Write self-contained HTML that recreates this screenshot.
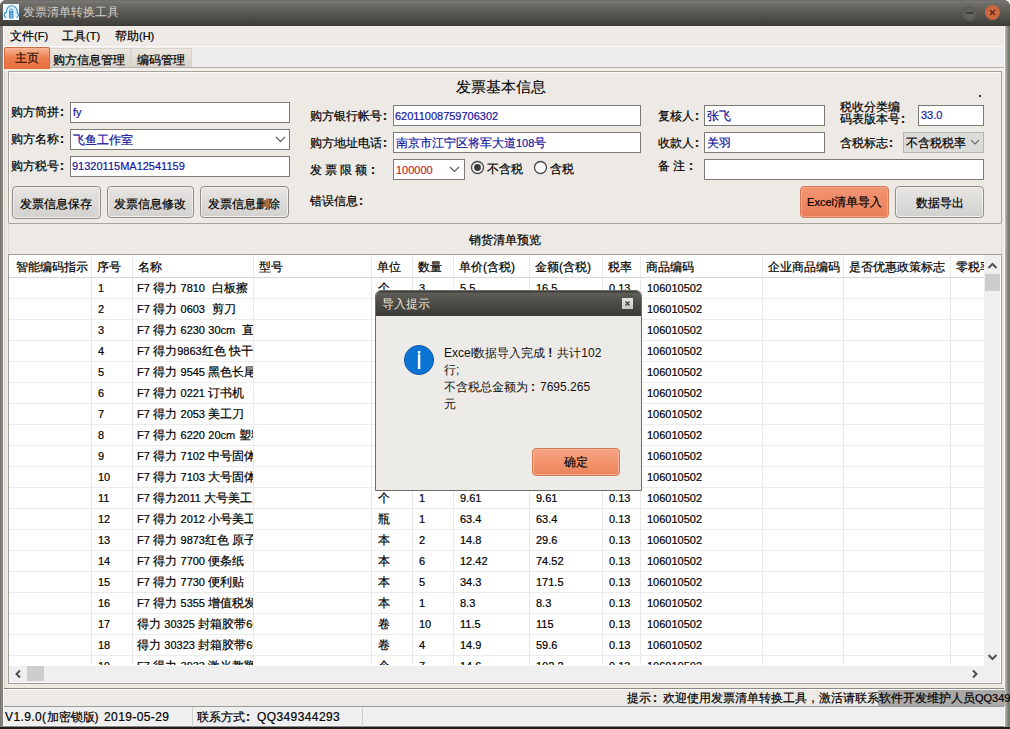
<!DOCTYPE html><html><head><meta charset="utf-8"><style>
*{box-sizing:border-box;margin:0;padding:0}
html,body{width:1010px;height:729px;overflow:hidden;background:#fff}
body{font-family:"Liberation Sans",sans-serif;font-size:12px;color:#000;position:relative}
.a{position:absolute;white-space:nowrap}
.t{position:absolute;white-space:nowrap;font-size:12px;line-height:14px;-webkit-text-stroke:0.2px}
.n{font-size:11px}
.n2{font-size:12px;letter-spacing:0.4px}
.c{font-weight:bold;margin-left:1px;letter-spacing:0}
.fc{display:inline-block;width:12px;padding-left:2px;font-weight:bold;text-align:left}
.dlg .fc{padding-left:3px}
.box{position:absolute;background:#fff;border:1px solid #7c7a76}
.btn{position:absolute;border:1px solid #8f8d89;border-radius:4px;background:linear-gradient(#e6e5e3,#d2d1ce);box-shadow:inset 0 0 0 1px #f0efed}
.blue{color:#15159c}
.cell{position:absolute;overflow:hidden;white-space:pre;font-size:12px;line-height:14px;-webkit-text-stroke:0.2px}
</style></head><body>
<div class="a" style="left:0;top:0;width:1010px;height:729px;background:#7d7a76;border-radius:6px 6px 0 0"></div>
<div class="a" style="left:1005px;top:20px;width:5px;height:709px;background:linear-gradient(90deg,#bfbcb5,#8c8a85 50%,#6e6e6a)"></div>
<div class="a" style="left:0;top:726px;width:1010px;height:1px;background:#8a8a88"></div>
<div class="a" style="left:0;top:727px;width:1010px;height:2px;background:#1e1e1e"></div>
<div class="a" style="left:0;top:0;width:1010px;height:26px;background:linear-gradient(#6c6b67 0%,#777672 6%,#6b6a65 18%,#5a5954 50%,#4a4944 75%,#3c3b37 100%);border-radius:6px 6px 0 0"></div>
<div class="a" style="left:3px;top:4px;width:16px;height:16px;background:#f2fbff"></div>
<svg class="a" style="left:3px;top:4px" width="16" height="16" viewBox="0 0 16 16"><path d="M3.2 13.5 C0.6 13.3 0.6 8.6 3.3 8.4 C3.4 4.2 6 1.6 9 1.8 C12.4 2 14.6 5 14.2 8.6 C16 9.6 15.6 13.3 13.4 13.5" fill="#def2fb" stroke="#3b8dc9" stroke-width="1.1"/><rect x="6" y="7" width="4.4" height="7.5" fill="#3b8dc9"/><path d="M6.8 9.2 H9.6 M6.8 11.2 H9.6 M6.8 13 H9.6" stroke="#bfe3f5" stroke-width="0.8"/><circle cx="8.2" cy="6.6" r="1.6" fill="none" stroke="#3b8dc9" stroke-width="1"/></svg>
<div class="t" style="left:23px;top:5px;color:#d3cfc7;-webkit-text-stroke:0">发票清单转换工具</div>
<div class="a" style="left:962px;top:6px;width:15px;height:15px;border-radius:50%;background:radial-gradient(#6a6964,#55544f);"></div>
<div class="a" style="left:966px;top:12px;width:7px;height:2px;background:#3e3d39"></div>
<div class="a" style="left:985px;top:5px;width:15px;height:15px;border-radius:50%;background:radial-gradient(#d97248,#c05d33)"></div>
<svg class="a" style="left:985px;top:5px" width="15" height="15"><path d="M5 5 L10 10 M10 5 L5 10" stroke="#5a2a14" stroke-width="1.5"/></svg>
<div class="a" style="left:3px;top:26px;width:1002px;height:700px;background:#edeae6"></div>
<div class="a" style="left:0;top:26px;width:3px;height:700px;background:linear-gradient(90deg,#6f6d69,#8b8985 50%,#7f7c78)"></div>
<div class="a" style="left:3px;top:26px;width:1px;height:700px;background:#faf8ef"></div>
<div class="a" style="left:4px;top:69px;width:1px;height:619px;background:#d3d0c7"></div>
<div class="a" style="left:1004px;top:26px;width:1px;height:701px;background:#f7f6f3"></div>
<div class="a" style="left:4px;top:26px;width:1000px;height:20px;background:#eeebe7"></div>
<div class="t" style="left:10px;top:29px">文件<span class="n">(F)</span></div>
<div class="t" style="left:62px;top:29px">工具<span class="n">(T)</span></div>
<div class="t" style="left:115px;top:29px">帮助<span class="n">(H)</span></div>
<div class="a" style="left:4px;top:46px;width:1000px;height:1px;background:#fbfaf8"></div>
<div class="a" style="left:4px;top:47px;width:1000px;height:20px;background:#eeeeee"></div>
<div class="a" style="left:4px;top:67px;width:1000px;height:1px;background:#b4b2ae"></div>
<div class="a" style="left:4px;top:68px;width:1000px;height:3px;background:#f3f0eb"></div>
<div class="a" style="left:50px;top:48px;width:81px;height:19px;background:linear-gradient(#ebe8e1,#d9d4ca);border:1px solid #d8d4cc;border-bottom:none"></div>
<div class="a" style="left:131px;top:48px;width:61px;height:19px;background:linear-gradient(#ebe8e1,#d9d4ca);border:1px solid #d8d4cc;border-bottom:none"></div>
<div class="a" style="left:4px;top:47px;width:46px;height:22px;background:linear-gradient(#f7b697,#ef7f4e 45%,#e8703e);border:1px solid #d06a40;border-bottom:none;border-radius:2px 2px 0 0"></div>
<div class="t" style="left:15px;top:51px;color:#2b1208">主页</div>
<div class="t" style="left:53px;top:53px">购方信息管理</div>
<div class="t" style="left:137px;top:53px">编码管理</div>
<div class="a" style="left:4px;top:688px;width:1000px;height:1px;background:#8a8884"></div>
<div class="a" style="left:4px;top:689px;width:1000px;height:1px;background:#fdfcfa"></div>
<div class="a" style="left:8px;top:71px;width:994px;height:153px;border:1px solid #a6a39e;box-shadow:inset 1px 1px 0 #fbfaf8"></div>
<div class="t" style="left:456px;top:78px;font-size:15px;line-height:17px;-webkit-text-stroke:0.1px">发票基本信息</div>
<div class="a" style="left:979px;top:95px;width:2px;height:2px;background:#333"></div>
<div class="t" style="left:11px;top:105px">购方简拼<b class="c">:</b></div>
<div class="t" style="left:11px;top:132px">购方名称<b class="c">:</b></div>
<div class="t" style="left:11px;top:159px">购方税号<b class="c">:</b></div>
<div class="box" style="left:70px;top:102px;width:220px;height:21px"></div>
<div class="t blue" style="left:73px;top:105px"><span class="n">fy</span></div>
<div class="box" style="left:70px;top:129px;width:220px;height:21px"></div>
<div class="t blue" style="left:73px;top:133px">飞鱼工作室</div>
<svg class="a" style="left:275px;top:136px" width="11" height="7"><path d="M1 1 L5.5 5.5 L10 1" fill="none" stroke="#5a5a5a" stroke-width="1.1"/></svg>
<div class="box" style="left:70px;top:156px;width:220px;height:21px"></div>
<div class="t blue" style="left:72px;top:159px"><span class="n">91320115MA12541159</span></div>
<div class="btn" style="left:12px;top:186px;width:89px;height:33px"></div>
<div class="t" style="left:11px;top:197px;width:89px;text-align:center">发票信息保存</div>
<div class="btn" style="left:107px;top:186px;width:87px;height:32px"></div>
<div class="t" style="left:106px;top:197px;width:87px;text-align:center">发票信息修改</div>
<div class="btn" style="left:200px;top:186px;width:89px;height:32px"></div>
<div class="t" style="left:199px;top:197px;width:89px;text-align:center">发票信息删除</div>
<div class="t" style="left:310px;top:109px">购方银行帐号<b class="c">:</b></div>
<div class="box" style="left:393px;top:105px;width:248px;height:21px"></div>
<div class="t blue" style="left:395px;top:109px"><span class="n">62011008759706302</span></div>
<div class="t" style="left:310px;top:136px">购方地址电话<b class="c">:</b></div>
<div class="box" style="left:393px;top:132px;width:248px;height:21px"></div>
<div class="t blue" style="left:396px;top:136px">南京市江宁区将军大道<span class="n">108</span>号</div>
<div class="t" style="left:310px;top:163px;letter-spacing:3px">发票限额<b class="c">:</b></div>
<div class="box" style="left:393px;top:159px;width:72px;height:21px"></div>
<div class="t" style="left:396px;top:163px;color:#c0282d"><span class="n">100000</span></div>
<svg class="a" style="left:449px;top:166px" width="11" height="7"><path d="M1 1 L5.5 5.5 L10 1" fill="none" stroke="#5a5a5a" stroke-width="1.1"/></svg>
<svg class="a" style="left:470px;top:160px" width="15" height="15"><circle cx="7.5" cy="7.5" r="6" fill="#f4f4f4" stroke="#4a4a4a" stroke-width="1.3"/><circle cx="7.5" cy="7.5" r="3.4" fill="#3a3a3a"/></svg>
<div class="t" style="left:487px;top:162px">不含税</div>
<svg class="a" style="left:533px;top:160px" width="15" height="15"><circle cx="7.5" cy="7.5" r="6" fill="#f8f8f8" stroke="#4a4a4a" stroke-width="1.3"/></svg>
<div class="t" style="left:550px;top:162px">含税</div>
<div class="t" style="left:310px;top:194px">错误信息<b class="c">:</b></div>
<div class="t" style="left:658px;top:109px">复核人<b class="c">:</b></div>
<div class="box" style="left:704px;top:105px;width:121px;height:21px"></div>
<div class="t blue" style="left:707px;top:109px">张飞</div>
<div class="t" style="left:658px;top:136px">收款人<b class="c">:</b></div>
<div class="box" style="left:704px;top:132px;width:121px;height:21px"></div>
<div class="t blue" style="left:707px;top:136px">关羽</div>
<div class="t" style="left:658px;top:159px;letter-spacing:3px">备注<b class="c">:</b></div>
<div class="box" style="left:704px;top:159px;width:280px;height:21px"></div>
<div class="t" style="left:840px;top:101px;line-height:12px">税收分类编<br>码表版本号<b class="c">:</b></div>
<div class="box" style="left:918px;top:105px;width:66px;height:21px"></div>
<div class="t blue" style="left:921px;top:108px"><span class="n">33.0</span></div>
<div class="t" style="left:840px;top:136px">含税标志<b class="c">:</b></div>
<div class="a" style="left:903px;top:132px;width:81px;height:21px;background:#dbdbda;border:1px solid #b5b5b3"></div>
<div class="t" style="left:906px;top:136px;width:62px;overflow:hidden">不含税税率</div>
<svg class="a" style="left:970px;top:139px" width="10" height="7"><path d="M1 1 L5 5 L9 1" fill="none" stroke="#6a6a6a" stroke-width="1.1"/></svg>
<div class="btn" style="left:800px;top:186px;width:89px;height:32px;background:linear-gradient(#f39574,#ea7e58);border-color:#d27c58;box-shadow:inset 0 0 0 1px #f5a283"></div>
<div class="t" style="left:800px;top:195px;width:89px;text-align:center"><span class="n">Excel</span>清单导入</div>
<div class="btn" style="left:895px;top:186px;width:89px;height:32px"></div>
<div class="t" style="left:895px;top:196px;width:89px;text-align:center">数据导出</div>
<div class="a" style="left:8px;top:223px;width:994px;height:32px;border-left:1px solid #dcd9d3;border-right:1px solid #dcd9d3"></div>
<div class="t" style="left:469px;top:233px">销货清单预览</div>
<div class="a" style="left:8px;top:254px;width:994px;height:430px;background:#fff;border:1px solid #a19e99"></div>
<div class="a" style="left:91px;top:255px;width:1px;height:410px;background:#e8e8e8"></div>
<div class="a" style="left:132px;top:255px;width:1px;height:410px;background:#e8e8e8"></div>
<div class="a" style="left:253px;top:255px;width:1px;height:410px;background:#e8e8e8"></div>
<div class="a" style="left:371px;top:255px;width:1px;height:410px;background:#e8e8e8"></div>
<div class="a" style="left:412px;top:255px;width:1px;height:410px;background:#e8e8e8"></div>
<div class="a" style="left:453px;top:255px;width:1px;height:410px;background:#e8e8e8"></div>
<div class="a" style="left:529px;top:255px;width:1px;height:410px;background:#e8e8e8"></div>
<div class="a" style="left:602px;top:255px;width:1px;height:410px;background:#e8e8e8"></div>
<div class="a" style="left:640px;top:255px;width:1px;height:410px;background:#e8e8e8"></div>
<div class="a" style="left:762px;top:255px;width:1px;height:410px;background:#e8e8e8"></div>
<div class="a" style="left:843px;top:255px;width:1px;height:410px;background:#e8e8e8"></div>
<div class="a" style="left:950px;top:255px;width:1px;height:410px;background:#e8e8e8"></div>
<div class="a" style="left:9px;top:277px;width:975px;height:1px;background:#d8d8d8"></div>
<div class="cell" style="left:16px;top:260px;width:75px">智能编码指示</div>
<div class="cell" style="left:97px;top:260px;width:35px">序号</div>
<div class="cell" style="left:138px;top:260px;width:115px">名称</div>
<div class="cell" style="left:259px;top:260px;width:112px">型号</div>
<div class="cell" style="left:377px;top:260px;width:35px">单位</div>
<div class="cell" style="left:418px;top:260px;width:35px">数量</div>
<div class="cell" style="left:459px;top:260px;width:70px">单价(含税)</div>
<div class="cell" style="left:535px;top:260px;width:67px">金额(含税)</div>
<div class="cell" style="left:608px;top:260px;width:32px">税率</div>
<div class="cell" style="left:646px;top:260px;width:116px">商品编码</div>
<div class="cell" style="left:768px;top:260px;width:75px">企业商品编码</div>
<div class="cell" style="left:849px;top:260px;width:101px">是否优惠政策标志</div>
<div class="cell" style="left:956px;top:260px;width:28px">零税率标识</div>
<div class="a" style="left:9px;top:278px;width:975px;height:387px;overflow:hidden">
<div class="a" style="left:0;top:20px;width:975px;height:1px;background:#ececec"></div>
<div class="cell" style="left:89px;top:3px;width:34px"><span class="n">1</span></div>
<div class="cell" style="left:128px;top:3px;width:116px"><span class="n">F7</span> 得力 <span class="n">7810</span>  白板擦</div>
<div class="cell" style="left:369px;top:3px;width:34px">个</div>
<div class="cell" style="left:410px;top:3px;width:34px"><span class="n">3</span></div>
<div class="cell" style="left:451px;top:3px;width:69px"><span class="n">5.5</span></div>
<div class="cell" style="left:527px;top:3px;width:66px"><span class="n">16.5</span></div>
<div class="cell" style="left:600px;top:3px;width:31px"><span class="n">0.13</span></div>
<div class="cell" style="left:638px;top:3px;width:115px"><span class="n">106010502</span></div>
<div class="a" style="left:0;top:41px;width:975px;height:1px;background:#ececec"></div>
<div class="cell" style="left:89px;top:24px;width:34px"><span class="n">2</span></div>
<div class="cell" style="left:128px;top:24px;width:116px"><span class="n">F7</span> 得力 <span class="n">0603</span>  剪刀</div>
<div class="cell" style="left:369px;top:24px;width:34px">个</div>
<div class="cell" style="left:410px;top:24px;width:34px"><span class="n">2</span></div>
<div class="cell" style="left:451px;top:24px;width:69px"><span class="n">4.2</span></div>
<div class="cell" style="left:527px;top:24px;width:66px"><span class="n">8.4</span></div>
<div class="cell" style="left:600px;top:24px;width:31px"><span class="n">0.13</span></div>
<div class="cell" style="left:638px;top:24px;width:115px"><span class="n">106010502</span></div>
<div class="a" style="left:0;top:62px;width:975px;height:1px;background:#ececec"></div>
<div class="cell" style="left:89px;top:45px;width:34px"><span class="n">3</span></div>
<div class="cell" style="left:128px;top:45px;width:116px"><span class="n">F7</span> 得力 <span class="n">6230</span> <span class="n">30cm</span>  直尺</div>
<div class="cell" style="left:369px;top:45px;width:34px">把</div>
<div class="cell" style="left:410px;top:45px;width:34px"><span class="n">5</span></div>
<div class="cell" style="left:451px;top:45px;width:69px"><span class="n">1.5</span></div>
<div class="cell" style="left:527px;top:45px;width:66px"><span class="n">7.5</span></div>
<div class="cell" style="left:600px;top:45px;width:31px"><span class="n">0.13</span></div>
<div class="cell" style="left:638px;top:45px;width:115px"><span class="n">106010502</span></div>
<div class="a" style="left:0;top:83px;width:975px;height:1px;background:#ececec"></div>
<div class="cell" style="left:89px;top:66px;width:34px"><span class="n">4</span></div>
<div class="cell" style="left:128px;top:66px;width:116px"><span class="n">F7</span> 得力<span class="n">9863</span>红色 快干</div>
<div class="cell" style="left:369px;top:66px;width:34px">支</div>
<div class="cell" style="left:410px;top:66px;width:34px"><span class="n">10</span></div>
<div class="cell" style="left:451px;top:66px;width:69px"><span class="n">1.2</span></div>
<div class="cell" style="left:527px;top:66px;width:66px"><span class="n">12</span></div>
<div class="cell" style="left:600px;top:66px;width:31px"><span class="n">0.13</span></div>
<div class="cell" style="left:638px;top:66px;width:115px"><span class="n">106010502</span></div>
<div class="a" style="left:0;top:104px;width:975px;height:1px;background:#ececec"></div>
<div class="cell" style="left:89px;top:87px;width:34px"><span class="n">5</span></div>
<div class="cell" style="left:128px;top:87px;width:116px"><span class="n">F7</span> 得力 <span class="n">9545</span> 黑色长尾夹</div>
<div class="cell" style="left:369px;top:87px;width:34px">盒</div>
<div class="cell" style="left:410px;top:87px;width:34px"><span class="n">3</span></div>
<div class="cell" style="left:451px;top:87px;width:69px"><span class="n">6.5</span></div>
<div class="cell" style="left:527px;top:87px;width:66px"><span class="n">19.5</span></div>
<div class="cell" style="left:600px;top:87px;width:31px"><span class="n">0.13</span></div>
<div class="cell" style="left:638px;top:87px;width:115px"><span class="n">106010502</span></div>
<div class="a" style="left:0;top:125px;width:975px;height:1px;background:#ececec"></div>
<div class="cell" style="left:89px;top:108px;width:34px"><span class="n">6</span></div>
<div class="cell" style="left:128px;top:108px;width:116px"><span class="n">F7</span> 得力 <span class="n">0221</span> 订书机</div>
<div class="cell" style="left:369px;top:108px;width:34px">个</div>
<div class="cell" style="left:410px;top:108px;width:34px"><span class="n">2</span></div>
<div class="cell" style="left:451px;top:108px;width:69px"><span class="n">12.5</span></div>
<div class="cell" style="left:527px;top:108px;width:66px"><span class="n">25</span></div>
<div class="cell" style="left:600px;top:108px;width:31px"><span class="n">0.13</span></div>
<div class="cell" style="left:638px;top:108px;width:115px"><span class="n">106010502</span></div>
<div class="a" style="left:0;top:146px;width:975px;height:1px;background:#ececec"></div>
<div class="cell" style="left:89px;top:129px;width:34px"><span class="n">7</span></div>
<div class="cell" style="left:128px;top:129px;width:116px"><span class="n">F7</span> 得力 <span class="n">2053</span> 美工刀</div>
<div class="cell" style="left:369px;top:129px;width:34px">把</div>
<div class="cell" style="left:410px;top:129px;width:34px"><span class="n">4</span></div>
<div class="cell" style="left:451px;top:129px;width:69px"><span class="n">3.5</span></div>
<div class="cell" style="left:527px;top:129px;width:66px"><span class="n">14</span></div>
<div class="cell" style="left:600px;top:129px;width:31px"><span class="n">0.13</span></div>
<div class="cell" style="left:638px;top:129px;width:115px"><span class="n">106010502</span></div>
<div class="a" style="left:0;top:167px;width:975px;height:1px;background:#ececec"></div>
<div class="cell" style="left:89px;top:150px;width:34px"><span class="n">8</span></div>
<div class="cell" style="left:128px;top:150px;width:116px"><span class="n">F7</span> 得力 <span class="n">6220</span> <span class="n">20cm</span> 塑料</div>
<div class="cell" style="left:369px;top:150px;width:34px">把</div>
<div class="cell" style="left:410px;top:150px;width:34px"><span class="n">6</span></div>
<div class="cell" style="left:451px;top:150px;width:69px"><span class="n">1.1</span></div>
<div class="cell" style="left:527px;top:150px;width:66px"><span class="n">6.6</span></div>
<div class="cell" style="left:600px;top:150px;width:31px"><span class="n">0.13</span></div>
<div class="cell" style="left:638px;top:150px;width:115px"><span class="n">106010502</span></div>
<div class="a" style="left:0;top:188px;width:975px;height:1px;background:#ececec"></div>
<div class="cell" style="left:89px;top:171px;width:34px"><span class="n">9</span></div>
<div class="cell" style="left:128px;top:171px;width:116px"><span class="n">F7</span> 得力 <span class="n">7102</span> 中号固体胶</div>
<div class="cell" style="left:369px;top:171px;width:34px">支</div>
<div class="cell" style="left:410px;top:171px;width:34px"><span class="n">8</span></div>
<div class="cell" style="left:451px;top:171px;width:69px"><span class="n">2.1</span></div>
<div class="cell" style="left:527px;top:171px;width:66px"><span class="n">16.8</span></div>
<div class="cell" style="left:600px;top:171px;width:31px"><span class="n">0.13</span></div>
<div class="cell" style="left:638px;top:171px;width:115px"><span class="n">106010502</span></div>
<div class="a" style="left:0;top:209px;width:975px;height:1px;background:#ececec"></div>
<div class="cell" style="left:89px;top:192px;width:34px"><span class="n">10</span></div>
<div class="cell" style="left:128px;top:192px;width:116px"><span class="n">F7</span> 得力 <span class="n">7103</span> 大号固体胶</div>
<div class="cell" style="left:369px;top:192px;width:34px">支</div>
<div class="cell" style="left:410px;top:192px;width:34px"><span class="n">8</span></div>
<div class="cell" style="left:451px;top:192px;width:69px"><span class="n">3.2</span></div>
<div class="cell" style="left:527px;top:192px;width:66px"><span class="n">25.6</span></div>
<div class="cell" style="left:600px;top:192px;width:31px"><span class="n">0.13</span></div>
<div class="cell" style="left:638px;top:192px;width:115px"><span class="n">106010502</span></div>
<div class="a" style="left:0;top:230px;width:975px;height:1px;background:#ececec"></div>
<div class="cell" style="left:89px;top:213px;width:34px"><span class="n">11</span></div>
<div class="cell" style="left:128px;top:213px;width:116px"><span class="n">F7</span> 得力<span class="n">2011</span> 大号美工刀</div>
<div class="cell" style="left:369px;top:213px;width:34px">个</div>
<div class="cell" style="left:410px;top:213px;width:34px"><span class="n">1</span></div>
<div class="cell" style="left:451px;top:213px;width:69px"><span class="n">9.61</span></div>
<div class="cell" style="left:527px;top:213px;width:66px"><span class="n">9.61</span></div>
<div class="cell" style="left:600px;top:213px;width:31px"><span class="n">0.13</span></div>
<div class="cell" style="left:638px;top:213px;width:115px"><span class="n">106010502</span></div>
<div class="a" style="left:0;top:251px;width:975px;height:1px;background:#ececec"></div>
<div class="cell" style="left:89px;top:234px;width:34px"><span class="n">12</span></div>
<div class="cell" style="left:128px;top:234px;width:116px"><span class="n">F7</span> 得力 <span class="n">2012</span> 小号美工刀</div>
<div class="cell" style="left:369px;top:234px;width:34px">瓶</div>
<div class="cell" style="left:410px;top:234px;width:34px"><span class="n">1</span></div>
<div class="cell" style="left:451px;top:234px;width:69px"><span class="n">63.4</span></div>
<div class="cell" style="left:527px;top:234px;width:66px"><span class="n">63.4</span></div>
<div class="cell" style="left:600px;top:234px;width:31px"><span class="n">0.13</span></div>
<div class="cell" style="left:638px;top:234px;width:115px"><span class="n">106010502</span></div>
<div class="a" style="left:0;top:272px;width:975px;height:1px;background:#ececec"></div>
<div class="cell" style="left:89px;top:255px;width:34px"><span class="n">13</span></div>
<div class="cell" style="left:128px;top:255px;width:116px"><span class="n">F7</span> 得力 <span class="n">9873</span>红色 原子笔</div>
<div class="cell" style="left:369px;top:255px;width:34px">本</div>
<div class="cell" style="left:410px;top:255px;width:34px"><span class="n">2</span></div>
<div class="cell" style="left:451px;top:255px;width:69px"><span class="n">14.8</span></div>
<div class="cell" style="left:527px;top:255px;width:66px"><span class="n">29.6</span></div>
<div class="cell" style="left:600px;top:255px;width:31px"><span class="n">0.13</span></div>
<div class="cell" style="left:638px;top:255px;width:115px"><span class="n">106010502</span></div>
<div class="a" style="left:0;top:293px;width:975px;height:1px;background:#ececec"></div>
<div class="cell" style="left:89px;top:276px;width:34px"><span class="n">14</span></div>
<div class="cell" style="left:128px;top:276px;width:116px"><span class="n">F7</span> 得力 <span class="n">7700</span> 便条纸</div>
<div class="cell" style="left:369px;top:276px;width:34px">本</div>
<div class="cell" style="left:410px;top:276px;width:34px"><span class="n">6</span></div>
<div class="cell" style="left:451px;top:276px;width:69px"><span class="n">12.42</span></div>
<div class="cell" style="left:527px;top:276px;width:66px"><span class="n">74.52</span></div>
<div class="cell" style="left:600px;top:276px;width:31px"><span class="n">0.13</span></div>
<div class="cell" style="left:638px;top:276px;width:115px"><span class="n">106010502</span></div>
<div class="a" style="left:0;top:314px;width:975px;height:1px;background:#ececec"></div>
<div class="cell" style="left:89px;top:297px;width:34px"><span class="n">15</span></div>
<div class="cell" style="left:128px;top:297px;width:116px"><span class="n">F7</span> 得力 <span class="n">7730</span> 便利贴</div>
<div class="cell" style="left:369px;top:297px;width:34px">本</div>
<div class="cell" style="left:410px;top:297px;width:34px"><span class="n">5</span></div>
<div class="cell" style="left:451px;top:297px;width:69px"><span class="n">34.3</span></div>
<div class="cell" style="left:527px;top:297px;width:66px"><span class="n">171.5</span></div>
<div class="cell" style="left:600px;top:297px;width:31px"><span class="n">0.13</span></div>
<div class="cell" style="left:638px;top:297px;width:115px"><span class="n">106010502</span></div>
<div class="a" style="left:0;top:335px;width:975px;height:1px;background:#ececec"></div>
<div class="cell" style="left:89px;top:318px;width:34px"><span class="n">16</span></div>
<div class="cell" style="left:128px;top:318px;width:116px"><span class="n">F7</span> 得力 <span class="n">5355</span> 增值税发票</div>
<div class="cell" style="left:369px;top:318px;width:34px">本</div>
<div class="cell" style="left:410px;top:318px;width:34px"><span class="n">1</span></div>
<div class="cell" style="left:451px;top:318px;width:69px"><span class="n">8.3</span></div>
<div class="cell" style="left:527px;top:318px;width:66px"><span class="n">8.3</span></div>
<div class="cell" style="left:600px;top:318px;width:31px"><span class="n">0.13</span></div>
<div class="cell" style="left:638px;top:318px;width:115px"><span class="n">106010502</span></div>
<div class="a" style="left:0;top:356px;width:975px;height:1px;background:#ececec"></div>
<div class="cell" style="left:89px;top:339px;width:34px"><span class="n">17</span></div>
<div class="cell" style="left:128px;top:339px;width:116px">得力 <span class="n">30325</span> 封箱胶带<span class="n">60</span></div>
<div class="cell" style="left:369px;top:339px;width:34px">卷</div>
<div class="cell" style="left:410px;top:339px;width:34px"><span class="n">10</span></div>
<div class="cell" style="left:451px;top:339px;width:69px"><span class="n">11.5</span></div>
<div class="cell" style="left:527px;top:339px;width:66px"><span class="n">115</span></div>
<div class="cell" style="left:600px;top:339px;width:31px"><span class="n">0.13</span></div>
<div class="cell" style="left:638px;top:339px;width:115px"><span class="n">106010502</span></div>
<div class="a" style="left:0;top:377px;width:975px;height:1px;background:#ececec"></div>
<div class="cell" style="left:89px;top:360px;width:34px"><span class="n">18</span></div>
<div class="cell" style="left:128px;top:360px;width:116px">得力 <span class="n">30323</span> 封箱胶带<span class="n">60</span></div>
<div class="cell" style="left:369px;top:360px;width:34px">卷</div>
<div class="cell" style="left:410px;top:360px;width:34px"><span class="n">4</span></div>
<div class="cell" style="left:451px;top:360px;width:69px"><span class="n">14.9</span></div>
<div class="cell" style="left:527px;top:360px;width:66px"><span class="n">59.6</span></div>
<div class="cell" style="left:600px;top:360px;width:31px"><span class="n">0.13</span></div>
<div class="cell" style="left:638px;top:360px;width:115px"><span class="n">106010502</span></div>
<div class="a" style="left:0;top:398px;width:975px;height:1px;background:#ececec"></div>
<div class="cell" style="left:89px;top:381px;width:34px"><span class="n">19</span></div>
<div class="cell" style="left:128px;top:381px;width:116px"><span class="n">F7</span> 得力 <span class="n">3933</span> 激光教鞭</div>
<div class="cell" style="left:369px;top:381px;width:34px">个</div>
<div class="cell" style="left:410px;top:381px;width:34px"><span class="n">7</span></div>
<div class="cell" style="left:451px;top:381px;width:69px"><span class="n">14.6</span></div>
<div class="cell" style="left:527px;top:381px;width:66px"><span class="n">102.2</span></div>
<div class="cell" style="left:600px;top:381px;width:31px"><span class="n">0.13</span></div>
<div class="cell" style="left:638px;top:381px;width:115px"><span class="n">106010502</span></div>
</div>
<div class="a" style="left:984px;top:255px;width:16px;height:411px;background:#efeff0"></div>
<svg class="a" style="left:986px;top:261px" width="13" height="10"><path d="M2.5 7 L6.5 3 L10.5 7" fill="none" stroke="#505050" stroke-width="2"/></svg>
<div class="a" style="left:985px;top:274px;width:15px;height:17px;background:#cdcdcd"></div>
<svg class="a" style="left:986px;top:652px" width="13" height="10"><path d="M2.5 3 L6.5 7 L10.5 3" fill="none" stroke="#505050" stroke-width="2"/></svg>
<div class="a" style="left:9px;top:666px;width:975px;height:16px;background:#efeff0"></div>
<div class="a" style="left:984px;top:666px;width:16px;height:16px;background:#efeff0"></div>
<svg class="a" style="left:12px;top:667px" width="12" height="14"><path d="M8 3.5 L4.5 7 L8 10.5" fill="none" stroke="#4a4a4a" stroke-width="1.9"/></svg>
<div class="a" style="left:27px;top:666px;width:17px;height:15px;background:#cdcdcd"></div>
<svg class="a" style="left:969px;top:667px" width="12" height="14"><path d="M4 3.5 L7.5 7 L4 10.5" fill="none" stroke="#4a4a4a" stroke-width="1.9"/></svg>
<div class="a" style="left:4px;top:690px;width:1000px;height:16px;background:#edeae6"></div>
<div class="a" style="left:878px;top:690px;width:127px;height:16px;background:#a9a8a6"></div>
<div class="t" style="left:627px;top:691px">提示<span class="fc">:</span>欢迎使用发票清单转换工具，激活请联系软件开发维护人员<span class="n">QQ349344293</span></div>
<div class="a" style="left:4px;top:706px;width:1000px;height:20px;background:#efefef;border-top:1px solid #9a9a9a;border-bottom:1px solid #f7f7f7"></div>
<div class="a" style="left:192px;top:707px;width:1px;height:20px;background:#d0cec9"></div>
<div class="a" style="left:362px;top:707px;width:1px;height:20px;background:#d0cec9"></div>
<div class="t" style="left:5px;top:710px"><span class="n2">V1.9.0(</span>加密锁版<span class="n2">)</span></div>
<div class="t" style="left:104px;top:710px"><span class="n2">2019-05-29</span></div>
<div class="t" style="left:197px;top:710px">联系方式<b class="c">:</b></div>
<div class="t" style="left:257px;top:710px"><span class="n2">QQ349344293</span></div>
<div class="a" style="left:375px;top:290px;width:267px;height:201px;background:#edebe7;border:1px solid #6f6d68;border-radius:6px 6px 0 0;overflow:hidden">
<div class="a" style="left:0;top:0;width:267px;height:25px;background:linear-gradient(#3f3e3a 0,#3f3e3a 4%,#5e5d58 8%,#4c4b46 50%,#3b3a36 100%)"></div>
</div>
<div class="t" style="left:382px;top:297px;color:#e8e5de;-webkit-text-stroke:0">导入提示</div>
<div class="a" style="left:622px;top:298px;width:11px;height:11px;background:linear-gradient(#e6e5e3,#c9c8c6)"></div>
<svg class="a" style="left:622px;top:298px" width="11" height="11"><path d="M3.5 3.5 L7.5 7.5 M7.5 3.5 L3.5 7.5" stroke="#444" stroke-width="1.4"/></svg>
<svg class="a" style="left:403px;top:344px" width="32" height="32"><circle cx="16" cy="16" r="14.6" fill="#0c74d4" stroke="#0b4f9c" stroke-width="0.9"/><rect x="14.9" y="10.3" width="2.4" height="14.7" fill="#fff"/><rect x="14.9" y="7" width="2.4" height="2.6" fill="#fff"/></svg>
<div class="t dlg" style="left:444px;top:345px;line-height:17px;-webkit-text-stroke:0;color:#111">Excel数据导入完成<span class="fc">!</span>共计102<br>行;<br>不含税总金额为<span class="fc">:</span>7695.265<br>元</div>
<div class="btn" style="left:532px;top:448px;width:88px;height:28px;background:linear-gradient(#f5a584,#ec8358);border-color:#d47a55;box-shadow:inset 0 0 0 1px #f7b39a"></div>
<div class="t" style="left:532px;top:455px;width:88px;text-align:center;-webkit-text-stroke:0.1px">确定</div>
</body></html>
